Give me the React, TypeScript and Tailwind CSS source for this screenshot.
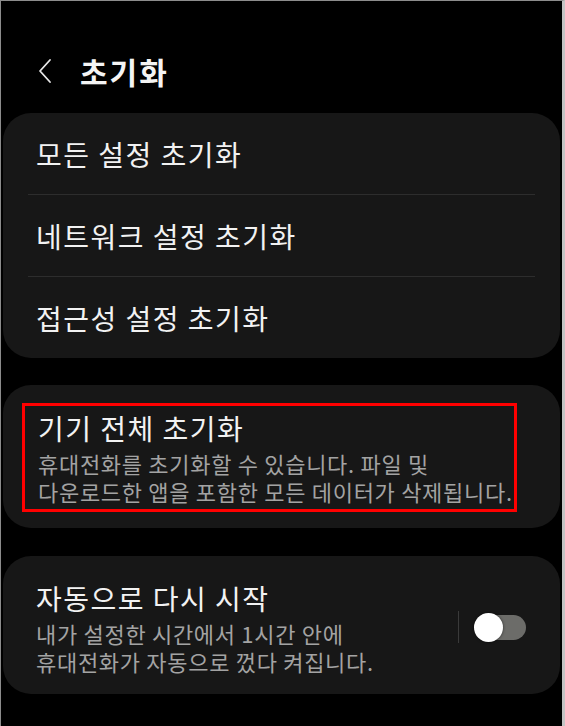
const FONT = { fontFamily: '"Noto Sans CJK KR", "Noto Sans", sans-serif' };

const RESET_ITEMS = ["모든 설정 초기화", "네트워크 설정 초기화", "접근성 설정 초기화"];

function BackIcon() {
  return (
    <svg width="16" height="26" viewBox="0 0 16 26" fill="none" className="text-[#e8e8e8]">
      <path d="M13 2 L3 13 L13 24" stroke="currentColor" strokeWidth="1.8" strokeLinecap="round" strokeLinejoin="round" />
    </svg>
  );
}

function Toggle() {
  return (
    <div className="flex items-center gap-[16px]">
      <div className="h-[32px] w-px bg-[#3a3a3a]" />
      <div className="relative h-[25px] w-[51px] rounded-full bg-[#6c6c69]">
        <div className="absolute left-[-1px] top-[-2px] h-[29px] w-[29px] rounded-full bg-white shadow-[0_0_3px_rgba(0,0,0,0.6)]" />
      </div>
    </div>
  );
}

export default function App() {
  return (
    <div
      style={FONT}
      className="h-[726px] w-[565px] overflow-hidden border-l border-t border-[#8c8c8c] border-r-[3px] border-r-[#c4c4c4] bg-black px-[2px]"
    >
      <header className="flex h-[112px] items-center pl-[34px] pt-[28px]">
        <BackIcon />
        <h1 className="ml-[27px] text-[30px] font-bold leading-none tracking-[2px] text-[#f4f4f4]">초기화</h1>
      </header>

      <section className="rounded-[28px] bg-[#171717]">
        {RESET_ITEMS.map((label, i) => (
          <div key={label}>
            {i > 0 && <div className="mx-[25px] h-px bg-[#2d2d2d]" />}
            <div className="flex h-[81px] items-center pl-[33px] text-[28px] leading-none tracking-[1.5px] text-[#f2f2f2]">
              {label}
            </div>
          </div>
        ))}
      </section>

      <section className="mt-[27px] rounded-[28px] bg-[#171717] pb-[16px] pl-[19px] pt-[18px]">
        <div className="w-[495px] border-[3px] border-[#ff0000] pb-[4px] pl-[13px] pt-[3px]">
          <div className="text-[28px] leading-[38px] tracking-[1.5px] text-[#f2f2f2]">기기 전체 초기화</div>
          <div className="mt-[2px] text-[22px] leading-[28px] tracking-[0.7px] text-[#a3a3a3]">
            <div>휴대전화를 초기화할 수 있습니다. 파일 및</div>
            <div className="whitespace-nowrap">다운로드한 앱을 포함한 모든 데이터가 삭제됩니다.</div>
          </div>
        </div>
      </section>

      <section className="mt-[28px] flex items-center rounded-[28px] bg-[#171717] pb-[19px] pl-[33px] pr-[34px] pt-[23px]">
        <div className="flex-1">
          <div className="text-[28px] leading-[38px] tracking-[1.5px] text-[#f2f2f2]">자동으로 다시 시작</div>
          <div className="mt-[2px] text-[22px] leading-[28px] tracking-[0.7px] text-[#a3a3a3]">
            <div>내가 설정한 시간에서 1시간 안에</div>
            <div>휴대전화가 자동으로 껐다 켜집니다.</div>
          </div>
        </div>
        <Toggle />
      </section>
    </div>
  );
}
